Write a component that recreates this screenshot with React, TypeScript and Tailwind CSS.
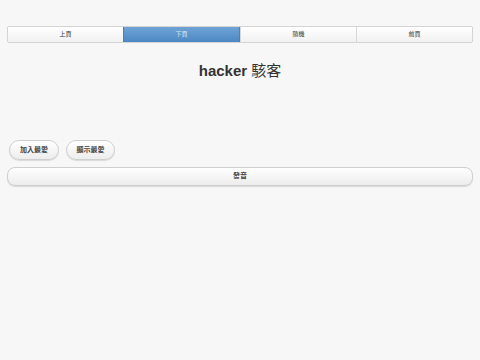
const TABS = ['上頁', '下頁', '隨機', '前頁']

const FONT = { fontFamily: '"Liberation Sans", "Noto Sans CJK TC", sans-serif' }

export default function App() {
  return (
    <div className="w-[480px] h-[360px] bg-[#f7f7f7] overflow-hidden" style={FONT}>
      {/* segmented nav */}
      <div className="pt-[26px] px-[7px]">
        <div className="flex h-[17px] border border-[#d4d4d4] rounded-[2px] overflow-hidden">
          {TABS.map((t, i) => (
            <div
              key={t}
              className={
                i === 1
                  ? 'flex-1 flex items-center justify-center text-[6px] text-[#dbe8f5] bg-gradient-to-b from-[#6fa3d6] to-[#4d88c4] border-x border-[#4a7fb8]'
                  : 'flex-1 flex items-center justify-center text-[6px] text-[#333] bg-gradient-to-b from-white to-[#f1f1f1] border-l border-[#d8d8d8] first:border-l-0'
              }
            >
              {t}
            </div>
          ))}
        </div>
      </div>

      <div className="mt-[18px] text-center text-[15px] leading-[20px] text-[#333]">
        <span className="font-bold">hacker</span> 駭客
      </div>

      <div className="mt-[59px] px-[9px] flex gap-[7px]">
        <button className="w-[50px] h-[20px] rounded-full border border-[#cfcfcf] bg-gradient-to-b from-white to-[#ededed] shadow-[0_1px_1px_rgba(0,0,0,0.12)] text-[7px] font-bold text-[#444]">
          加入最愛
        </button>
        <button className="w-[49px] h-[20px] rounded-full border border-[#cfcfcf] bg-gradient-to-b from-white to-[#ededed] shadow-[0_1px_1px_rgba(0,0,0,0.12)] text-[7px] font-bold text-[#444]">
          顯示最愛
        </button>
      </div>

      <div className="mt-[7px] px-[7px] flex">
        <button className="block w-full h-[19px] rounded-[8px] border border-[#cfcfcf] bg-gradient-to-b from-white to-[#ededed] shadow-[0_1px_1px_rgba(0,0,0,0.12)] text-[7px] font-bold text-[#444]">
          發音
        </button>
      </div>
    </div>
  )
}
